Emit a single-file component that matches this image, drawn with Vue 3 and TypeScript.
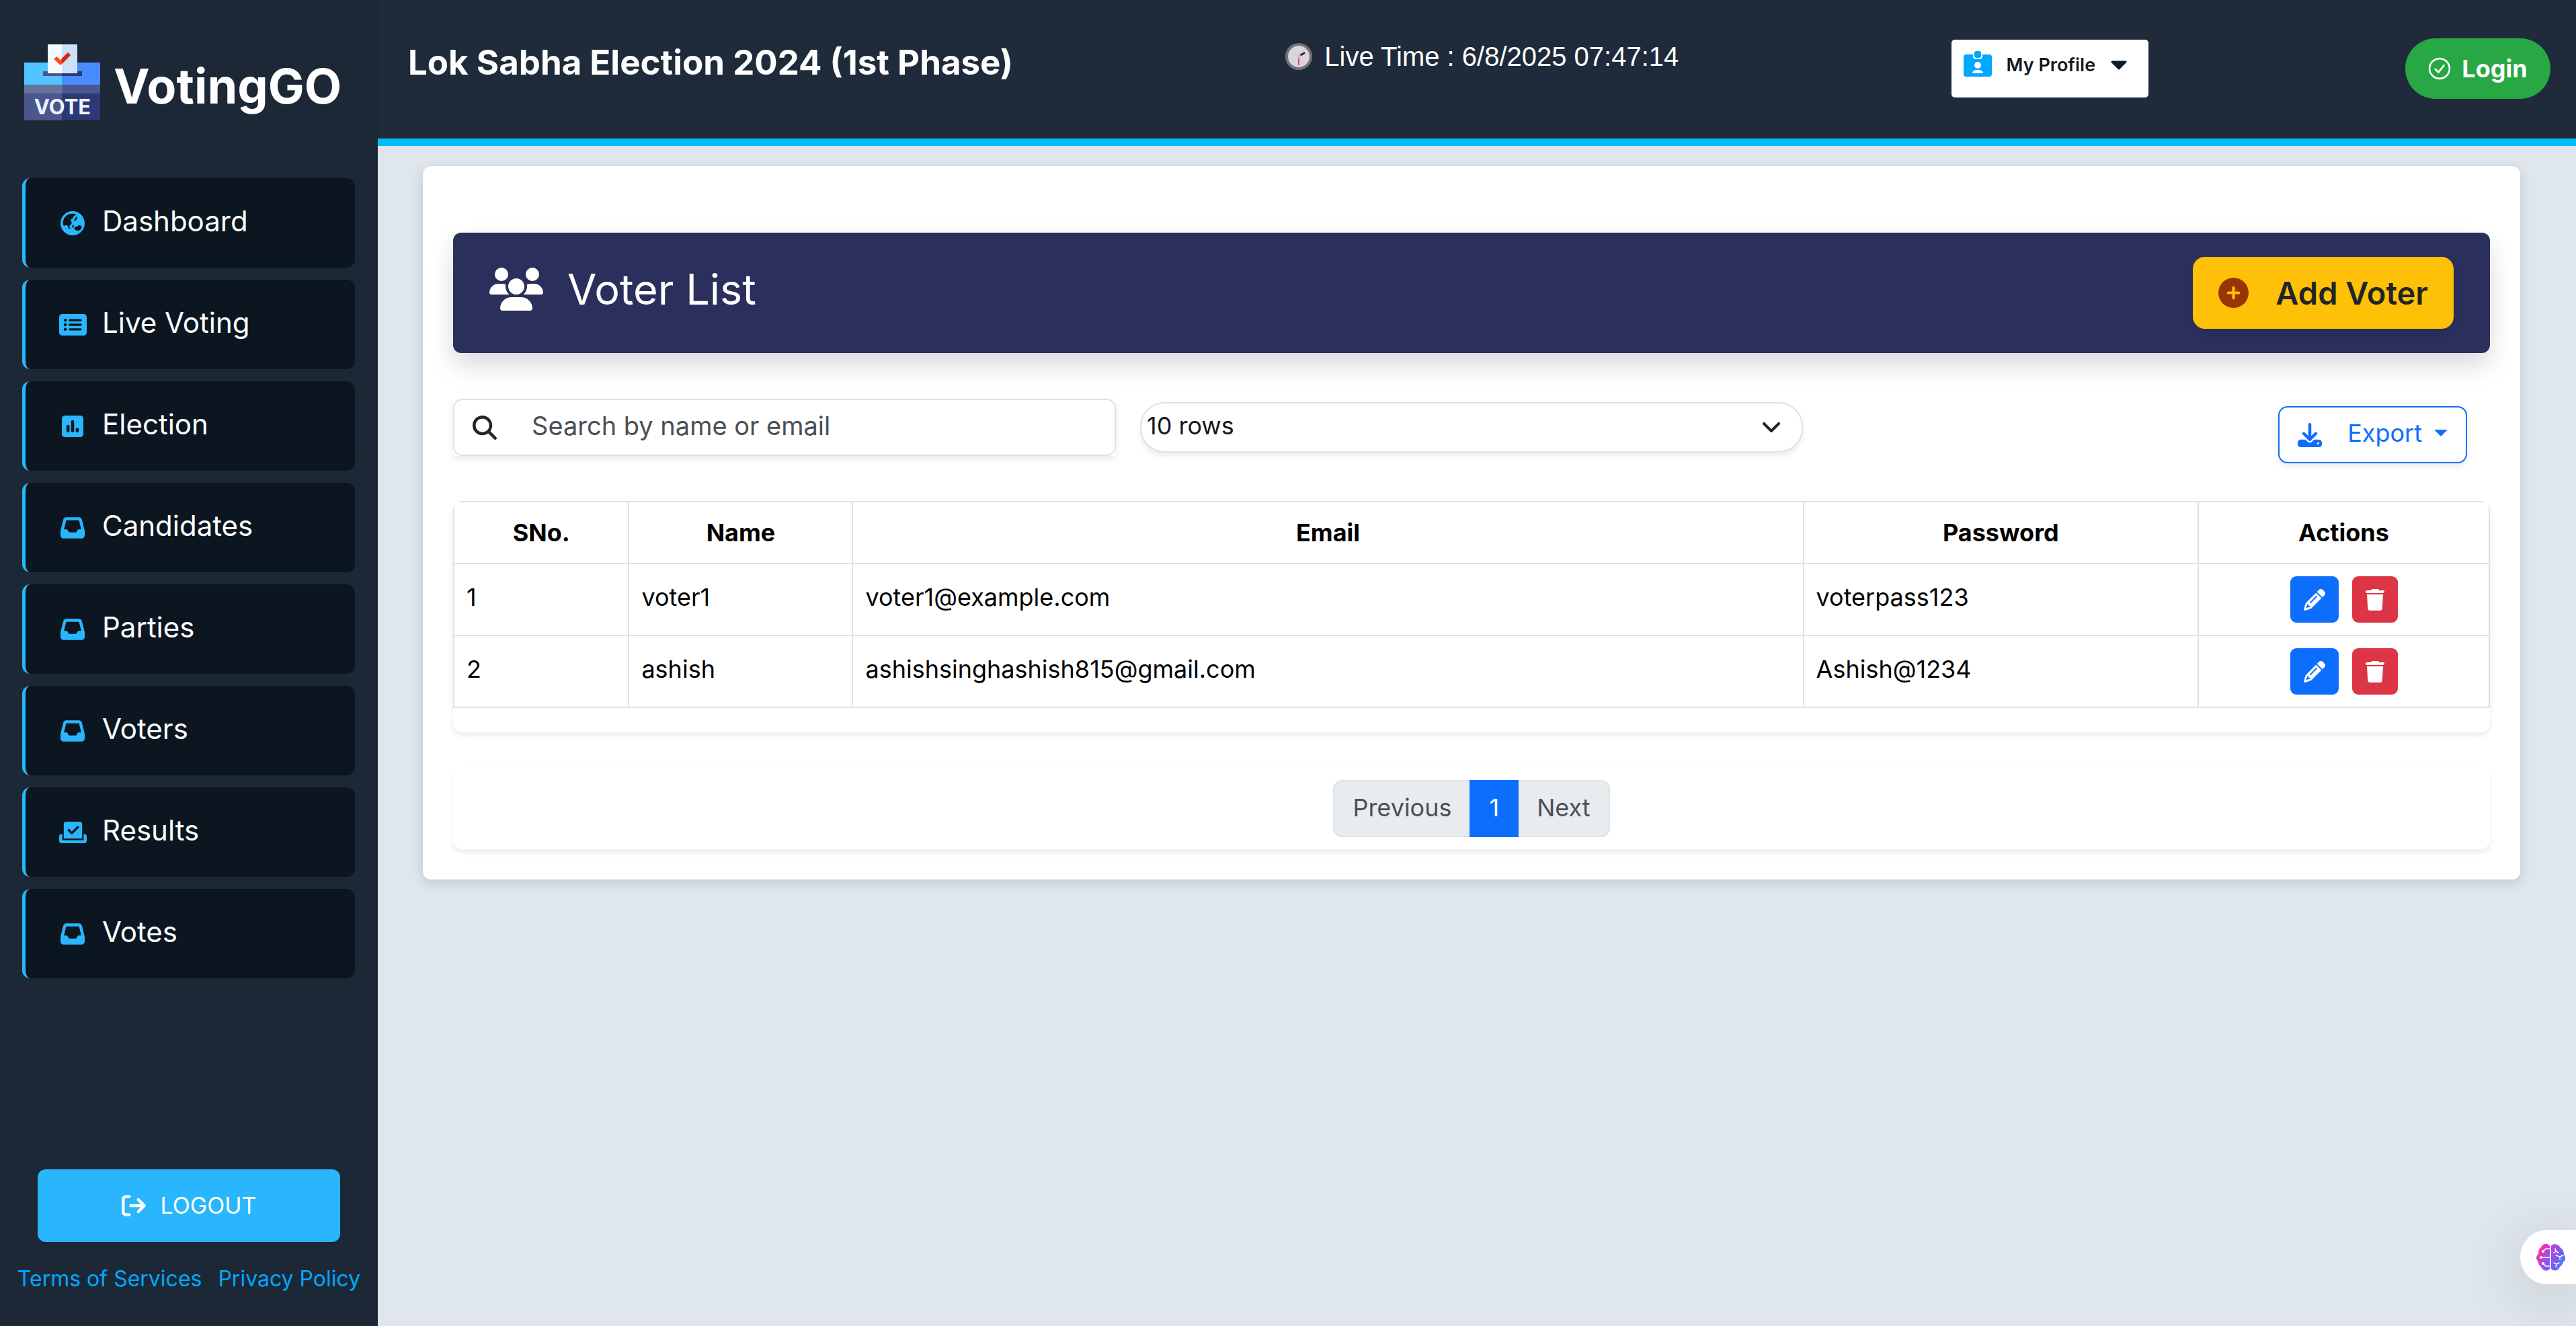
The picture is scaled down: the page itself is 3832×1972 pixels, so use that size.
<script setup lang="ts">
import { ref } from 'vue'

interface Icon {
  box: string
  width: number
  height: number
  path: string
}

interface NavItem {
  label: string
  icon: string
}

interface Voter {
  id: number
  name: string
  email: string
  password: string
}

const icons: Record<string, Icon> = {
  globe: {
    box: '0 0 512 512',
    width: 36,
    height: 36,
    path: 'M256 0a256 256 0 1 0 0 512A256 256 0 1 0 256 0zM50 262c0-96 56-176 144-202l80-8 46 8 4 16-54 40-8 34-34 18-14 36 26 40-16 44-22 2-12 46-18 10-26-42-44-10-18 20-24-16zM330 118l22 6-14 62-32 18-22-4 18-38zM262 288l20 6-8 50-22 6-8-28zM150 346l50 2 20 18-40 8zM396 294l52 24-12 62-48 34-64-10-34-32 14-40 48-10z',
  },
  list: {
    box: '0 32 576 448',
    width: 41,
    height: 32,
    path: 'M0 96C0 60.7 28.7 32 64 32H512c35.3 0 64 28.7 64 64V416c0 35.3-28.7 64-64 64H64c-35.3 0-64-28.7-64-64V96zM128 288a32 32 0 1 0 0-64 32 32 0 1 0 0 64zm32-128a32 32 0 1 0 -64 0 32 32 0 1 0 64 0zM128 384a32 32 0 1 0 0-64 32 32 0 1 0 0 64zm96-248c-13.3 0-24 10.7-24 24s10.7 24 24 24H448c13.3 0 24-10.7 24-24s-10.7-24-24-24H224zm0 96c-13.3 0-24 10.7-24 24s10.7 24 24 24H448c13.3 0 24-10.7 24-24s-10.7-24-24-24H224zm0 96c-13.3 0-24 10.7-24 24s10.7 24 24 24H448c13.3 0 24-10.7 24-24s-10.7-24-24-24H224z',
  },
  poll: {
    box: '0 32 448 448',
    width: 32,
    height: 32,
    path: 'M448 96c0-35.3-28.7-64-64-64H64C28.7 32 0 60.7 0 96V416c0 35.3 28.7 64 64 64H384c35.3 0 64-28.7 64-64V96zM256 160v192c0 17.7-14.3 32-32 32s-32-14.3-32-32V160c0-17.7 14.3-32 32-32s32 14.3 32 32zM160 256v96c0 17.7-14.3 32-32 32s-32-14.3-32-32V256c0-17.7 14.3-32 32-32s32 14.3 32 32zM352 320v32c0 17.7-14.3 32-32 32s-32-14.3-32-32V320c0-17.7 14.3-32 32-32s32 14.3 32 32z',
  },
  inbox: {
    box: '0 32 512 448',
    width: 36,
    height: 32,
    path: 'M121 32C91.6 32 66 52 58.9 80.5L1.9 308.4C.6 313.5 0 318.7 0 323.9V416c0 35.3 28.7 64 64 64H448c35.3 0 64-28.7 64-64V323.9c0-5.2-.6-10.4-1.9-15.5l-57-227.9C446 52 420.4 32 391 32H121zm0 64H391l48 192H387.8c-12.1 0-23.2 6.8-28.6 17.7l-14.3 28.6c-5.4 10.8-16.5 17.7-28.6 17.7H195.8c-12.1 0-23.2-6.8-28.6-17.7l-14.3-28.6c-5.4-10.8-16.5-17.7-28.6-17.7H73L121 96z',
  },
  slot: {
    box: '0 32 576 448',
    width: 41,
    height: 32,
    path: 'M96 80c0-26.5 21.5-48 48-48H432c26.5 0 48 21.5 48 48V384H96V80zm313 47c-9.4-9.4-24.6-9.4-33.9 0l-111 111-47-47c-9.4-9.4-24.6-9.4-33.9 0s-9.4 24.6 0 33.9l64 64c9.4 9.4 24.6 9.4 33.9 0L409 161c9.4-9.4 9.4-24.6 0-33.9zM0 336c0-26.5 21.5-48 48-48H64V416H512V288h16c26.5 0 48 21.5 48 48v96c0 26.5-21.5 48-48 48H48c-26.5 0-48-21.5-48-48V336z',
  },
}

const navItems: NavItem[] = [
  { label: 'Dashboard', icon: 'globe' },
  { label: 'Live Voting', icon: 'list' },
  { label: 'Election', icon: 'poll' },
  { label: 'Candidates', icon: 'inbox' },
  { label: 'Parties', icon: 'inbox' },
  { label: 'Voters', icon: 'inbox' },
  { label: 'Results', icon: 'slot' },
  { label: 'Votes', icon: 'inbox' },
]

const voters: Voter[] = [
  { id: 1, name: 'voter1', email: 'voter1@example.com', password: 'voterpass123' },
  { id: 2, name: 'ashish', email: 'ashishsinghashish815@gmail.com', password: 'Ashish@1234' },
]

const search = ref('')
const rows = ref('10')
</script>

<template>
  <div class="layout">
    <aside class="sidebar">
      <a class="brand" href="#">
        <svg class="brand-logo" viewBox="0 0 113 113" aria-hidden="true">
          <rect x="0" y="27" width="57" height="38" fill="#52c4ff" />
          <rect x="56" y="27" width="57" height="38" fill="#488bff" />
          <rect x="28" y="40" width="58" height="7" fill="#4a568c" />
          <rect x="56" y="40" width="30" height="7" fill="#2d3a76" />
          <rect x="35" y="0" width="22" height="43" fill="#f5faff" />
          <rect x="56" y="0" width="23" height="43" fill="#cbe2fb" />
          <path d="M44 22l4-4 6 5 11-11 4 4-15 15z" fill="#ff4b22" />
          <path d="M56 21l9-9 4 4-13 13z" fill="#d7240f" />
          <rect x="0" y="60" width="113" height="53" fill="#4a568c" />
          <rect x="56" y="60" width="57" height="13" fill="#4a568c" />
          <rect x="56" y="73" width="57" height="40" fill="#2c3975" />
          <rect x="0" y="60" width="57" height="13" fill="#66739d" />
          <text x="57" y="104" text-anchor="middle" class="brand-vote">VOTE</text>
        </svg>
        <span>VotingGO</span>
      </a>

      <nav class="nav">
        <a v-for="item in navItems" :key="item.label" class="nav-link" href="#">
          <span class="nav-icon">
            <svg
              :viewBox="icons[item.icon].box"
              :width="icons[item.icon].width"
              :height="icons[item.icon].height"
              aria-hidden="true"
            >
              <path :d="icons[item.icon].path" fill="currentColor" fill-rule="evenodd" />
            </svg>
          </span>
          <span class="nav-text">{{ item.label }}</span>
        </a>
      </nav>

      <div class="sidebar-foot">
        <button class="logout" type="button">
          <svg viewBox="0 0 512 512" width="36" height="36" aria-hidden="true">
            <path
              fill="currentColor"
              d="M502.6 278.6c12.5-12.5 12.5-32.8 0-45.3l-128-128c-12.5-12.5-32.8-12.5-45.3 0s-12.5 32.8 0 45.3L402.7 224 192 224c-17.7 0-32 14.3-32 32s14.3 32 32 32l210.7 0-73.4 73.4c-12.5 12.5-12.5 32.8 0 45.3s32.8 12.5 45.3 0l128-128zM160 96c17.7 0 32-14.3 32-32s-14.3-32-32-32L96 32C43 32 0 75 0 128L0 384c0 53 43 96 96 96l64 0c17.7 0 32-14.3 32-32s-14.3-32-32-32l-64 0c-17.7 0-32-14.3-32-32l0-256c0-17.7 14.3-32 32-32l64 0z"
            />
          </svg>
          LOGOUT
        </button>
        <div class="legal">
          <a href="#">Terms of Services</a>
          <a href="#">Privacy Policy</a>
        </div>
      </div>
    </aside>

    <div class="page">
      <header class="topbar">
        <h1>Lok Sabha Election 2024 (1st Phase)</h1>
        <div class="clock">
          <svg viewBox="0 0 40 40" width="40" height="40" aria-hidden="true">
            <circle cx="20" cy="20" r="20" fill="#757177" />
            <circle cx="20" cy="20" r="16" fill="#d8d5dc" />
            <path d="M20 20v12" stroke="#f8325f" stroke-width="2" stroke-linecap="round" />
            <path d="M21 19l7-4" stroke="#321b41" stroke-width="3" stroke-linecap="round" />
            <circle cx="20" cy="20" r="3" fill="#c8c2ce" />
          </svg>
          <span>Live Time : 6/8/2025 07:47:14</span>
        </div>
        <button class="profile" type="button">
          <svg viewBox="0 0 42 38" width="42" height="38" aria-hidden="true">
            <rect x="0" y="5" width="42" height="33" rx="4" fill="#00a8ff" />
            <rect x="14" y="-4" width="14" height="16" rx="4" fill="#fff" />
            <rect x="16" y="0" width="10" height="10" rx="3" fill="#00a8ff" />
            <circle cx="21" cy="21" r="5" fill="#fff" />
            <path d="M13 33c0-3 3-5 6-5h4c3 0 6 2 6 5z" fill="#fff" />
          </svg>
          <span>My Profile</span>
          <svg class="profile-caret" viewBox="0 0 24 14" width="24" height="14" aria-hidden="true">
            <path
              d="M2 2h20L12 12z"
              fill="#0d1b2a"
              stroke="#0d1b2a"
              stroke-width="3"
              stroke-linejoin="round"
            />
          </svg>
        </button>
        <button class="login" type="button">
          <svg viewBox="0 0 16 16" width="34" height="34" aria-hidden="true">
            <circle cx="8" cy="8" r="7" fill="none" stroke="currentColor" stroke-width="1.2" />
            <path
              d="M5 8.4l2.3 2.2L11 5.8"
              fill="none"
              stroke="currentColor"
              stroke-width="1.3"
              stroke-linecap="round"
              stroke-linejoin="round"
            />
          </svg>
          Login
        </button>
      </header>

      <main class="card">
        <section class="banner">
          <div class="banner-title">
            <svg viewBox="0 0 640 512" width="80" height="64" aria-hidden="true">
              <path
                fill="#fff"
                d="M144 0a80 80 0 1 1 0 160A80 80 0 1 1 144 0zM512 0a80 80 0 1 1 0 160A80 80 0 1 1 512 0zM0 298.7C0 239.8 47.8 192 106.7 192h42.7c15.9 0 31 3.5 44.6 9.7c-1.3 7.2-1.9 14.7-1.9 22.3c0 38.2 16.8 72.5 43.3 96c-.2 0-.4 0-.7 0H21.3C9.6 320 0 310.4 0 298.7zM405.3 320c-.2 0-.4 0-.7 0c26.6-23.5 43.3-57.8 43.3-96c0-7.6-.7-15-1.9-22.3c13.6-6.3 28.7-9.7 44.6-9.7h42.7C592.2 192 640 239.8 640 298.7c0 11.8-9.6 21.3-21.3 21.3H405.3zM224 224a96 96 0 1 1 192 0 96 96 0 1 1 -192 0zM128 485.3C128 411.7 187.7 352 261.3 352H378.7C452.3 352 512 411.7 512 485.3c0 14.7-11.9 26.7-26.7 26.7H154.7c-14.7 0-26.7-11.9-26.7-26.7z"
              />
            </svg>
            <h2>Voter List</h2>
          </div>
          <button class="add" type="button">
            <svg viewBox="0 0 512 512" width="45" height="45" aria-hidden="true">
              <path
                fill="#993404"
                fill-rule="evenodd"
                d="M256 512A256 256 0 1 0 256 0a256 256 0 1 0 0 512zM232 344V280H168c-13.3 0-24-10.7-24-24s10.7-24 24-24h64V168c0-13.3 10.7-24 24-24s24 10.7 24 24v64h64c13.3 0 24 10.7 24 24s-10.7 24-24 24H280v64c0 13.3-10.7 24-24 24s-24-10.7-24-24z"
              />
            </svg>
            Add Voter
          </button>
        </section>

        <section class="tools">
          <div class="search-shadow">
            <label class="search">
              <svg viewBox="0 0 512 512" width="36" height="36" aria-label="Search" role="img">
                <path
                  fill="#212529"
                  fill-rule="evenodd"
                  d="M416 208c0 45.9-14.9 88.3-40 122.7L502.6 457.4c12.5 12.5 12.5 32.8 0 45.3s-32.8 12.5-45.3 0L330.7 376c-34.4 25.2-76.8 40-122.7 40C93.1 416 0 322.9 0 208S93.1 0 208 0S416 93.1 416 208zM208 352a144 144 0 1 0 0-288 144 144 0 1 0 0 288z"
                />
              </svg>
              <input v-model="search" type="text" placeholder="Search by name or email" />
            </label>
          </div>
          <div class="rows">
            <select v-model="rows" aria-label="Rows per page">
              <option value="10">10 rows</option>
              <option value="25">25 rows</option>
              <option value="50">50 rows</option>
            </select>
            <svg class="rows-arrow" viewBox="0 0 26 16" width="26" height="16" aria-hidden="true">
              <path
                d="M2 2l11 11L24 2"
                fill="none"
                stroke="#212529"
                stroke-width="4"
                stroke-linecap="round"
                stroke-linejoin="round"
              />
            </svg>
          </div>
          <div class="export-slot">
            <button class="export" type="button">
              <svg viewBox="0 0 512 512" width="36" height="36" aria-hidden="true">
                <path
                  fill="currentColor"
                  fill-rule="evenodd"
                  d="M288 32c0-17.7-14.3-32-32-32s-32 14.3-32 32V274.7l-73.4-73.4c-12.5-12.5-32.8-12.5-45.3 0s-12.5 32.8 0 45.3l128 128c12.5 12.5 32.8 12.5 45.3 0l128-128c12.5-12.5 12.5-32.8 0-45.3s-32.8-12.5-45.3 0L288 274.7V32zM64 352c-35.3 0-64 28.7-64 64v32c0 35.3 28.7 64 64 64H448c35.3 0 64-28.7 64-64V416c0-35.3-28.7-64-64-64H346.5l-45.3 45.3c-25 25-65.5 25-90.5 0L165.5 352H64zm368 56a24 24 0 1 1 0 48 24 24 0 1 1 0-48z"
                />
              </svg>
              <span>Export</span>
              <svg class="export-caret" viewBox="0 0 20 10" width="20" height="10" aria-hidden="true">
                <path d="M0 0h20L10 10z" fill="currentColor" />
              </svg>
            </button>
          </div>
        </section>

        <section class="table-box">
          <table>
            <colgroup>
              <col class="col-no" />
              <col class="col-name" />
              <col class="col-email" />
              <col class="col-password" />
              <col class="col-actions" />
            </colgroup>
            <thead>
              <tr>
                <th>SNo.</th>
                <th>Name</th>
                <th>Email</th>
                <th>Password</th>
                <th>Actions</th>
              </tr>
            </thead>
            <tbody>
              <tr v-for="voter in voters" :key="voter.id">
                <td>{{ voter.id }}</td>
                <td>{{ voter.name }}</td>
                <td>{{ voter.email }}</td>
                <td>{{ voter.password }}</td>
                <td class="actions-cell">
                  <div class="actions">
                    <button class="edit" type="button" :aria-label="`Edit ${voter.name}`">
                      <svg viewBox="0 0 512 512" width="32" height="32" aria-hidden="true">
                        <path
                          fill="currentColor"
                          fill-rule="evenodd"
                          d="M410.3 231l11.3-11.3-33.9-33.9-62.1-62.1L291.7 89.8l-11.3 11.3-22.6 22.6L58.6 322.9c-10.4 10.4-18 23.3-22.2 37.4L1 480.7c-2.5 8.4-.2 17.5 6.1 23.7s15.3 8.5 23.7 6.1l120.3-35.4c14.1-4.2 27-11.8 37.4-22.2L387.7 253.7 410.3 231zM160 399.4l-9.1 22.7c-4 3.1-8.5 5.4-13.3 6.9L59.4 452l23-78.1c1.4-4.9 3.8-9.4 6.9-13.3l22.7-9.1v32c0 8.8 7.2 16 16 16h32zM362.7 18.7L348.3 33.2 325.7 55.8 314.3 67.1l33.9 33.9 62.1 62.1 33.9 33.9 11.3-11.3 22.6-22.6 14.5-14.5c25-25 25-65.5 0-90.5L453.3 18.7c-25-25-65.5-25-90.5 0zm-47.4 168l-144 144c-6.2 6.2-16.4 6.2-22.6 0s-6.2-16.4 0-22.6l144-144c6.2-6.2 16.4-6.2 22.6 0s6.2 16.4 0 22.6z"
                        />
                      </svg>
                    </button>
                    <button class="remove" type="button" :aria-label="`Delete ${voter.name}`">
                      <svg viewBox="0 0 448 512" width="28" height="32" aria-hidden="true">
                        <path
                          fill="currentColor"
                          d="M135.2 17.7L128 32H32C14.3 32 0 46.3 0 64S14.3 96 32 96H416c17.7 0 32-14.3 32-32s-14.3-32-32-32H320l-7.2-14.3C307.4 6.8 296.3 0 284.2 0H163.8c-12.1 0-23.2 6.8-28.6 17.7zM416 128H32L53.2 467c1.6 25.3 22.6 45 47.9 45H346.9c25.3 0 46.3-19.7 47.9-45L416 128z"
                        />
                      </svg>
                    </button>
                  </div>
                </td>
              </tr>
            </tbody>
          </table>
        </section>

        <nav class="pager" aria-label="Voter pages">
          <button class="previous" type="button">Previous</button>
          <button class="current" type="button" aria-current="page">1</button>
          <button class="next" type="button">Next</button>
        </nav>
      </main>
    </div>

    <button class="assistant" type="button" aria-label="Assistant">
      <svg viewBox="0 0 44 40" width="44" height="40" aria-hidden="true">
        <defs>
          <linearGradient id="brain-left" x1="0" y1="0" x2="1" y2="1">
            <stop offset="0" stop-color="#ff9a00" />
            <stop offset="0.3" stop-color="#f32fc0" />
            <stop offset="0.8" stop-color="#7b5cf0" />
          </linearGradient>
          <linearGradient id="brain-right" x1="0" y1="0" x2="1" y2="1">
            <stop offset="0" stop-color="#c93ee0" />
            <stop offset="0.5" stop-color="#7a58f2" />
            <stop offset="1" stop-color="#12a5ff" />
          </linearGradient>
        </defs>
        <path
          d="M20 3v34c-2 3-8 4-11 0-1-2-2-3-4-5-2-2-2-4-2-6-4-3-4-8 0-11C3 9 4 7 7 5c2-6 10-7 13-2z"
          fill="url(#brain-left)"
        />
        <path
          d="M22 3v34c2 3 9 4 12-1 1-3 5-4 6-9 4-3 4-8 1-11 0-4-1-8-5-10-2-6-11-8-14-3z"
          fill="url(#brain-right)"
        />
        <g fill="none" stroke="#fff" stroke-width="1.5" stroke-linecap="round">
          <path d="M20 7h-6l-4 4M20 20H7M20 33h-6l-4-4" />
          <path d="M28 7l1 4-3 2M29 11l4 2M29 17l6 2 5-2M35 19v4M26 28l4 2 4-2M30 30l-1 4" />
        </g>
        <g fill="#fff">
          <circle cx="10" cy="11" r="2" />
          <circle cx="7" cy="20" r="2" />
          <circle cx="10" cy="29" r="2" />
        </g>
      </svg>
    </button>
  </div>
</template>

<style>
body {
  margin: 0;
  background: #dfe6ed;
}
</style>

<style scoped>
.layout,
.layout * {
  box-sizing: border-box;
}

.layout {
  display: flex;
  min-height: 100vh;
  font-family: Inter, "Noto Sans", sans-serif;
  font-size: 36px;
  line-height: 54px;
  color: #212529;
}

.layout button,
.layout input,
.layout select {
  font: inherit;
}

.layout button {
  border: 0;
  cursor: pointer;
}

.layout a {
  text-decoration: none;
}

.layout svg {
  display: block;
  flex: none;
}

/* Sidebar */
.sidebar {
  flex: none;
  display: flex;
  flex-direction: column;
  width: 562px;
  background: #1c2836;
}

.brand {
  display: flex;
  align-items: flex-end;
  gap: 20px;
  padding: 66px 36px 0;
  color: #fff;
  font-size: 72px;
  line-height: 102px;
  font-weight: 700;
}

.brand-logo {
  width: 113px;
  height: 113px;
}

.brand-vote {
  fill: #eaf4ff;
  font-size: 31px;
  font-weight: 700;
}

.nav {
  display: flex;
  flex-direction: column;
  gap: 18px;
  padding: 86px 34px 0 33px;
}

.nav-link {
  display: flex;
  align-items: center;
  gap: 19px;
  height: 133px;
  padding: 0 44px 0 45px;
  border-left: 5px solid #29b6fc;
  border-radius: 12px;
  background: #0c1620;
  color: #fff;
  font-size: 42px;
  line-height: 64px;
}

.nav-icon {
  display: flex;
  justify-content: center;
  width: 50px;
  color: #29b6fc;
}

.nav-text {
  padding-bottom: 6px;
}

.sidebar-foot {
  margin-top: auto;
  padding-bottom: 43px;
}

.logout {
  display: flex;
  align-items: center;
  justify-content: center;
  gap: 22px;
  width: 450px;
  height: 108px;
  margin: 0 auto;
  border-radius: 12px;
  background: #29b6fc;
  color: #fff;
}

.layout .logout {
  font-size: 34px;
}

.legal {
  display: flex;
  justify-content: center;
  gap: 24px;
  padding-top: 28px;
  font-size: 32px;
  line-height: 54px;
  white-space: nowrap;
}

.legal a {
  color: #00a8ff;
}

/* Top bar */
.page {
  flex: 1;
  min-width: 0;
}

.topbar {
  display: flex;
  align-items: flex-start;
  padding: 57px 38px 59px 45px;
  border-bottom: 11px solid #00bdf7;
  background: #1f2b3a;
  color: #fff;
  white-space: nowrap;
}

.topbar h1 {
  margin: 0 auto 0 0;
  font-size: 51px;
  line-height: 72px;
  font-weight: 700;
}

.clock {
  display: flex;
  align-items: center;
  gap: 18px;
  margin-right: auto;
  font-family: "Liberation Sans", Arial, sans-serif;
  font-size: 40px;
  line-height: 54px;
}

.profile {
  display: flex;
  align-self: center;
  width: 293px;
  height: 86px;
  margin-right: 12%;
  padding: 17px 18px;
  border-radius: 5px;
  background: #fff;
  color: #16191d;
}

.layout .profile {
  font-size: 27px;
  line-height: 42px;
  font-weight: 600;
}

.profile span {
  margin-left: 22px;
}

.profile-caret {
  margin: 14px 14px 0 auto;
}

.login {
  display: flex;
  align-items: center;
  justify-content: center;
  gap: 16px;
  width: 216px;
  height: 90px;
  padding: 0;
  border-radius: 45px;
  background: #28a745;
  color: #fff;
}

.layout .login {
  font-weight: 700;
}

/* Content card */
.card {
  margin: 30px 83px 0 67px;
  padding: 99px 45px 45px;
  border-radius: 12px;
  background: #fff;
  box-shadow: 0 5px 18px rgba(0, 20, 10, 0.14);
}

.banner {
  display: flex;
  align-items: center;
  justify-content: space-between;
  padding: 36px 54px;
  border-radius: 12px;
  background: #2b2f5b;
  box-shadow: 0 18px 36px rgba(0, 0, 0, 0.15);
}

.banner-title {
  display: flex;
  align-items: center;
  gap: 36px;
  padding-bottom: 12px;
}

.banner h2 {
  margin: 0;
  color: #fff;
  font-size: 63px;
  line-height: 72px;
  font-weight: 400;
}

.add {
  display: flex;
  align-items: center;
  gap: 40px;
  height: 107px;
  padding: 0 38px;
  border-radius: 18px;
  background: #ffc107;
  color: #212529;
  box-shadow: 0 5px 9px rgba(0, 0, 0, 0.08);
}

.layout .add {
  font-size: 47px;
  line-height: 68px;
  font-weight: 600;
}

.tools {
  display: grid;
  grid-template-columns: repeat(3, minmax(0, 1fr));
  align-items: start;
  gap: 36px;
  padding-top: 68px;
}

.search-shadow {
  box-shadow: 0 5px 9px rgba(0, 0, 0, 0.08);
}

.search {
  display: flex;
  align-items: center;
  height: 85px;
  padding-left: 27px;
  border: 2px solid #dee2e6;
  border-radius: 14px;
  background: #fff;
}

.search input {
  flex: 1;
  min-width: 0;
  height: 60px;
  margin-left: 52px;
  padding: 0 0 6px;
  border: 0;
  outline: 0;
  background: transparent;
  color: #212529;
}

.search input,
.search input::placeholder {
  font-size: 38px;
}

.search input::placeholder {
  color: #495057;
  opacity: 1;
}

.rows {
  position: relative;
  padding-top: 5px;
}

.rows select {
  display: block;
  width: 100%;
  height: 75px;
  padding: 0 80px 6px 8px;
  border: 2px solid #dee2e6;
  border-radius: 36px;
  appearance: none;
  background: #fff;
  color: #16191d;
  box-shadow: 0 5px 9px rgba(0, 0, 0, 0.08);
}

.rows-arrow {
  position: absolute;
  top: 35px;
  right: 34px;
  pointer-events: none;
}

.export-slot {
  display: flex;
  justify-content: flex-end;
  padding: 11px 34px 0 0;
}

.export {
  display: flex;
  align-items: center;
  height: 85px;
  padding: 0 27px;
  border-radius: 14px;
  background: #fff;
  color: #0d6efd;
  box-shadow: 0 5px 9px rgba(0, 0, 0, 0.08);
}

.layout .export {
  border: 2px solid #0d6efd;
}

.export span {
  margin-left: 38px;
  padding-bottom: 6px;
}

.export-caret {
  margin-left: 18px;
  margin-bottom: 6px;
}

/* Voter table */
.table-box {
  margin-top: 56px;
  padding-bottom: 36px;
  border-radius: 14px;
  overflow: hidden;
  box-shadow: 0 5px 9px rgba(0, 0, 0, 0.08);
}

table {
  width: 100%;
  table-layout: fixed;
  border-collapse: collapse;
  color: #000;
}

.col-no {
  width: 8.6%;
}

.col-name {
  width: 11%;
}

.col-password {
  width: 19.4%;
}

.col-actions {
  width: 14.3%;
}

th,
td {
  padding: 18px;
  border: 2px solid #dee2e6;
  line-height: 54px;
}

th {
  font-weight: 700;
  text-align: center;
}

td {
  padding: 14px 18px 22px;
  text-align: left;
}

.actions-cell {
  padding: 18px;
}

.actions {
  display: flex;
  justify-content: center;
  gap: 20px;
}

.edit,
.remove {
  height: 69px;
  padding: 0 20px;
  border-radius: 9px;
  color: #fff;
}

.edit {
  background: #0d6efd;
}

.remove {
  background: #dc3545;
}

/* Pagination */
.pager {
  display: flex;
  justify-content: center;
  margin-top: 53px;
  padding: 18px;
  border-radius: 14px;
  box-shadow: 0 5px 9px rgba(0, 0, 0, 0.08);
}

.pager button {
  height: 85px;
  padding: 0 27px 4px;
  background: #e9ecef;
  color: #495057;
}

.layout .pager button {
  border: 2px solid #dee2e6;
}

.layout .pager .previous {
  border-right: 0;
  border-radius: 14px 0 0 14px;
}

.layout .pager .current {
  border-color: #0d6efd;
  background: #0d6efd;
  color: #fff;
}

.layout .pager .next {
  border-left: 0;
  border-radius: 0 14px 14px 0;
}

/* Floating assistant tab */
.assistant {
  position: fixed;
  right: 0;
  bottom: 62px;
  width: 83px;
  height: 81px;
  padding: 0 0 0 24px;
  border-radius: 41px 0 0 41px;
  background: #fff;
  box-shadow: 0 18px 90px rgba(0, 20, 10, 0.16);
}
</style>
